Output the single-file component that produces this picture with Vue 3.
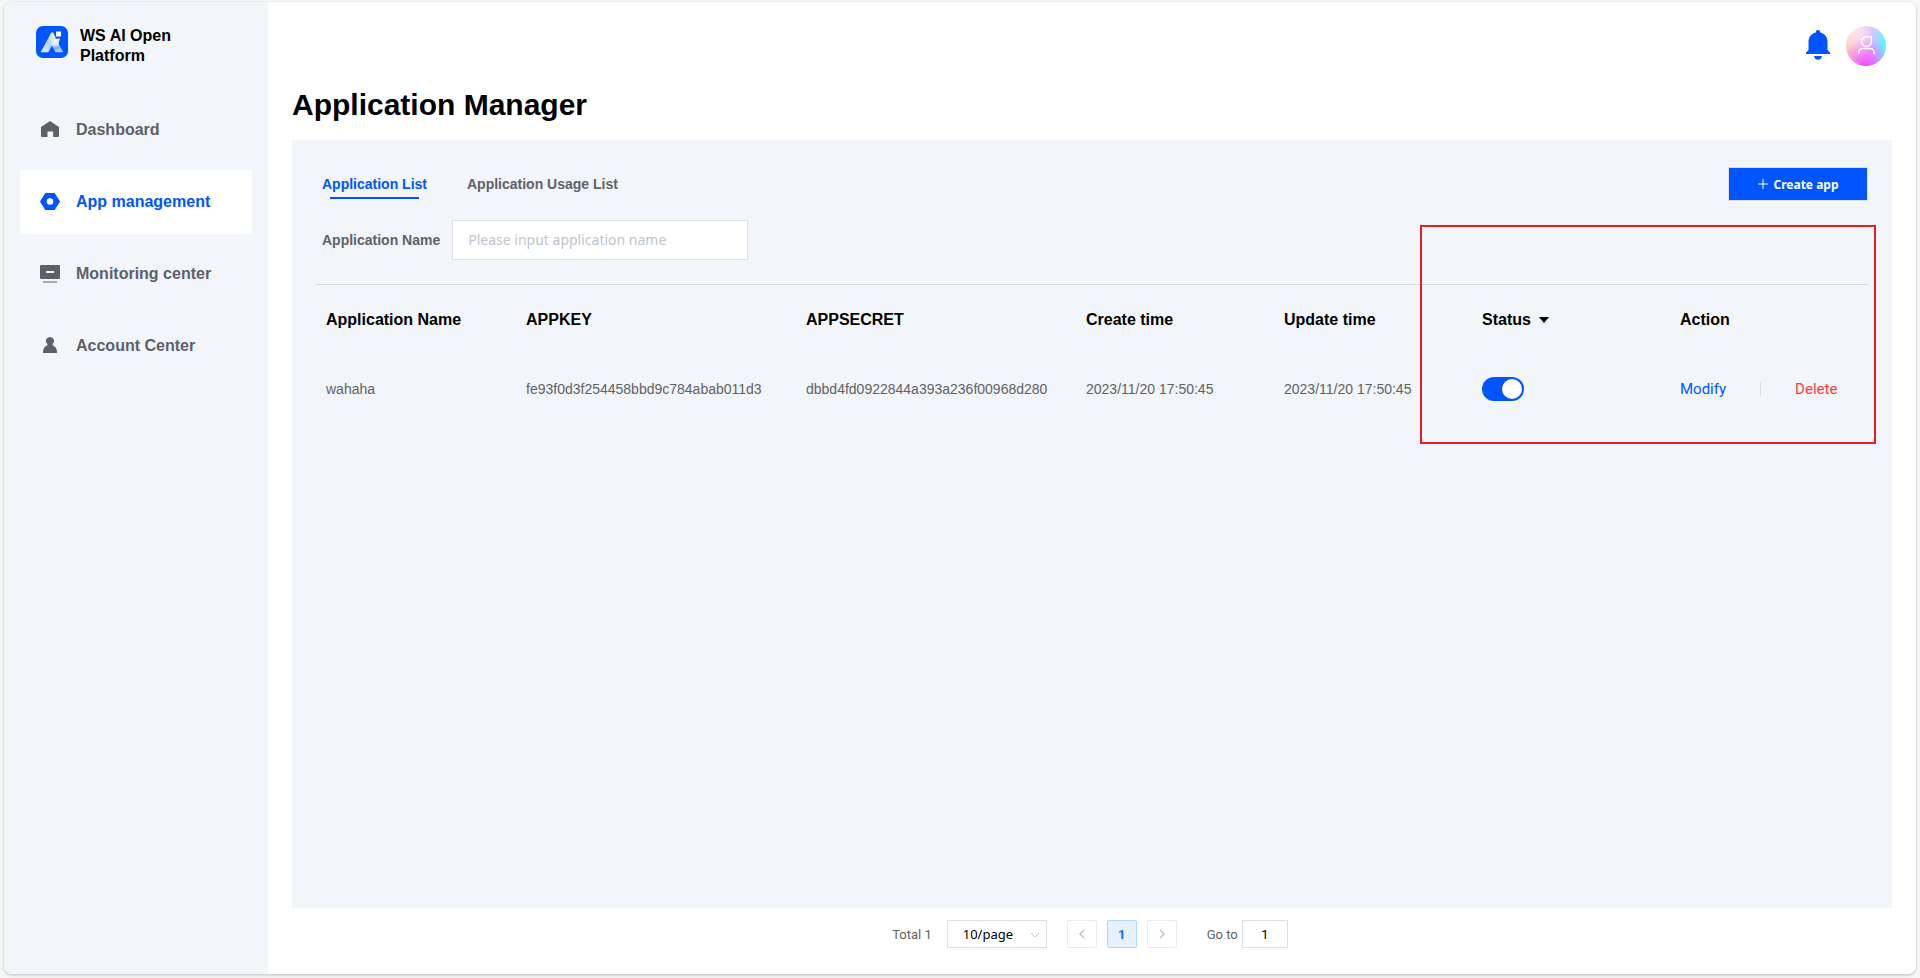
<script setup>
import { ref } from 'vue'

const menu = [
  { key: 'dashboard', label: 'Dashboard' },
  { key: 'apps', label: 'App management' },
  { key: 'monitor', label: 'Monitoring center' },
  { key: 'account', label: 'Account Center' },
]
const activeMenu = ref('apps')

const tabs = ['Application List', 'Application Usage List']
const activeTab = ref(tabs[0])

const appName = ref('')
const pageSize = ref('10/page')
const page = ref('1')

const rows = ref([
  {
    name: 'wahaha',
    key: 'fe93f0d3f254458bbd9c784abab011d3',
    secret: 'dbbd4fd0922844a393a236f00968d280',
    created: '2023/11/20 17:50:45',
    updated: '2023/11/20 17:50:45',
    enabled: true,
  },
])
</script>

<template>
  <div class="page">
    <div class="shell">
      <aside class="sidebar">
        <div class="brand">
          <svg class="logo" viewBox="0 0 32 32" aria-hidden="true">
            <defs>
              <linearGradient id="logo-left" x1="0" y1="1" x2="0.8" y2="0">
                <stop offset="0" stop-color="#fff" stop-opacity="0.95" />
                <stop offset="0.5" stop-color="#fff" stop-opacity="0.7" />
                <stop offset="1" stop-color="#fff" stop-opacity="0.95" />
              </linearGradient>
              <linearGradient id="logo-right" x1="0.5" y1="0" x2="0.6" y2="1">
                <stop offset="0" stop-color="#fff" />
                <stop offset="0.4" stop-color="#fff" stop-opacity="0.9" />
                <stop offset="0.65" stop-color="#fff" stop-opacity="0.5" />
                <stop offset="1" stop-color="#fff" stop-opacity="0.75" />
              </linearGradient>
            </defs>
            <rect width="32" height="32" rx="7" fill="#0055ff" />
            <path d="M15 7q1.200-1.600 2.400 0l2.400 5L12.300 26.300H4.700z" fill="url(#logo-left)" />
            <path d="M15.500 19l3-6 5.500-.5-1.500 5 4.700 8.800h-7.700z" fill="url(#logo-right)" />
            <rect x="20" y="5.500" width="5" height="5" fill="#fff" />
          </svg>
          <span class="brand-name">WS AI Open Platform</span>
        </div>
        <nav class="menu">
          <a
            v-for="item in menu"
            :key="item.key"
            href="#"
            class="menu-item"
            :class="{ active: item.key === activeMenu }"
            @click.prevent="activeMenu = item.key"
          >
            <svg class="menu-icon" viewBox="0 0 20 20" fill="currentColor" aria-hidden="true">
              <path v-if="item.key === 'dashboard'" d="M10 1L19 7V16a1 1 0 0 1-1 1h-4.800v-5.500H7.500v5.500H2a1 1 0 0 1-1-1V7z" />
              <path v-else-if="item.key === 'apps'" fill-rule="evenodd" d="M5.300 1h9.400L20 9.500l-5.300 8.500H5.300L0 9.500zM10 6.200a3.300 3.300 0 1 0 0 6.600 3.300 3.300 0 0 0 0-6.600z" />
              <template v-else-if="item.key === 'monitor'">
                <path fill-rule="evenodd" d="M1 1h18a1 1 0 0 1 1 1v12a1 1 0 0 1-1 1H1a1 1 0 0 1-1-1V2a1 1 0 0 1 1-1zM6 7v2h8V7z" />
                <rect x="3" y="17" width="14" height="2" opacity="0.5" />
              </template>
              <path v-else d="M10 1a4 4 0 0 1 2.600 7.100v1.200c2.600.9 4.400 3.300 4.400 6.700v1H3v-1c0-3.400 1.800-5.800 4.400-6.700V8.100A4 4 0 0 1 10 1z" />
            </svg>
            <span>{{ item.label }}</span>
          </a>
        </nav>
      </aside>

      <main class="content">
        <header class="topbar">
          <button class="plain-button" aria-label="Notifications">
            <svg class="bell" viewBox="0 0 24 32" fill="#0055ff" aria-hidden="true">
              <path d="M12 0a2.200 2.200 0 0 1 2.200 2.400C18.500 3.300 21.500 7 21.500 11.500V20L24 22.500V24H0v-1.500L2.500 20v-8.500C2.500 7 5.500 3.300 9.800 2.400A2.200 2.200 0 0 1 12 0z" />
              <path d="M8 26h8c-.3 2.300-1.700 3.700-4 3.700S8.300 28.300 8 26z" />
            </svg>
          </button>
          <button class="plain-button" aria-label="User account">
            <span class="avatar">
              <svg class="avatar-icon" viewBox="0 0 40 40" fill="none" stroke="#fff" stroke-width="1.400" aria-hidden="true">
                <path d="M25.300 10.700v4.800a4.900 4.900 0 1 1-4.900-4.800z" />
                <path d="M12.700 28v-1.500a4 4 0 0 1 4-4h7.400a4 4 0 0 1 4 4V28" />
              </svg>
            </span>
          </button>
        </header>

        <h1 class="title">Application Manager</h1>

        <section class="panel">
          <div class="panel-head">
            <div class="tabs" role="tablist">
              <button
                v-for="tab in tabs"
                :key="tab"
                role="tab"
                class="tab"
                :class="{ active: tab === activeTab }"
                :aria-selected="tab === activeTab"
                @click="activeTab = tab"
              >
                {{ tab }}
              </button>
            </div>
            <button class="create">
              <svg class="plus" viewBox="0 0 12 12" stroke="#fff" aria-hidden="true"><path d="M6 1v10M1 6h10" /></svg>
              <span>Create app</span>
            </button>
          </div>

          <div class="filter">
            <label for="app-name">Application Name</label>
            <input id="app-name" v-model="appName" type="text" placeholder="Please input application name" />
          </div>

          <table class="apps">
            <colgroup>
              <col class="col-name" />
              <col class="col-key" />
              <col class="col-key" />
              <col span="4" />
            </colgroup>
            <thead>
              <tr>
                <th>Application Name</th>
                <th>APPKEY</th>
                <th>APPSECRET</th>
                <th>Create time</th>
                <th>Update time</th>
                <th>
                  <button class="sort">
                    Status
                    <svg class="caret" viewBox="0 0 10 6" aria-hidden="true"><path d="M0 0h10L5 6z" /></svg>
                  </button>
                </th>
                <th>Action</th>
              </tr>
            </thead>
            <tbody>
              <tr v-for="row in rows" :key="row.key">
                <td>{{ row.name }}</td>
                <td>{{ row.key }}</td>
                <td>{{ row.secret }}</td>
                <td>{{ row.created }}</td>
                <td>{{ row.updated }}</td>
                <td><input v-model="row.enabled" class="switch" type="checkbox" role="switch" aria-label="Status" /></td>
                <td>
                  <div class="actions">
                    <a href="#" class="modify" @click.prevent>Modify</a>
                    <span class="separator"></span>
                    <a href="#" class="delete" @click.prevent>Delete</a>
                  </div>
                </td>
              </tr>
            </tbody>
          </table>
          <div class="highlight"></div>
        </section>

        <footer class="pager">
          <span class="total">Total 1</span>
          <span class="size">
            <select v-model="pageSize" aria-label="Rows per page">
              <option>10/page</option>
              <option>20/page</option>
              <option>50/page</option>
            </select>
            <svg class="size-arrow" viewBox="0 0 10 6" fill="none" stroke="#c0c4cc" aria-hidden="true"><path d="M1 1l4 4 4-4" /></svg>
          </span>
          <span class="pages">
            <button class="page-button" aria-label="Previous page">
              <svg class="chevron" viewBox="0 0 6 10" fill="none" stroke="#c0c4cc" stroke-width="1.500" aria-hidden="true"><path d="M5 1L1 5l4 4" /></svg>
            </button>
            <button class="page-button current">1</button>
            <button class="page-button" aria-label="Next page">
              <svg class="chevron" viewBox="0 0 6 10" fill="none" stroke="#c0c4cc" stroke-width="1.500" aria-hidden="true"><path d="M1 1l4 4-4 4" /></svg>
            </button>
          </span>
          <label class="goto">Go to <input v-model="page" type="text" /></label>
        </footer>
      </main>
    </div>
  </div>
</template>

<style>
body {
  background: #f7f7f7;
}
</style>

<style scoped>
.page,
.page * {
  box-sizing: border-box;
}
.page {
  display: flex;
  min-height: 100vh;
  padding: 2px 4px 4px;
  font-family: 'Liberation Sans', Arial, sans-serif;
  font-size: 14px;
  color: #606266;
}
.page button,
.page input,
.page select {
  font: inherit;
  color: inherit;
  margin: 0;
}
.page a {
  text-decoration: none;
}
.shell {
  flex: 1;
  display: flex;
  overflow: hidden;
  border-radius: 8px;
  background: #fff;
  box-shadow: 0 1px 3px rgba(0, 0, 0, 0.25);
}
.sidebar {
  flex: none;
  width: 264px;
  padding: 16px;
  background: #f2f5fa;
}
.brand {
  display: flex;
  gap: 12px;
  padding: 8px 16px;
}
.logo {
  flex: none;
  width: 32px;
  height: 32px;
}
.brand-name {
  width: 120px;
  font-size: 16px;
  font-weight: bold;
  line-height: 20px;
  color: #000;
}
.menu {
  display: flex;
  flex-direction: column;
  gap: 8px;
  margin-top: 24px;
}
.menu-item {
  display: flex;
  align-items: center;
  gap: 16px;
  height: 64px;
  padding: 0 20px;
  font-size: 16px;
  font-weight: bold;
  color: #5c606a;
}
.page .menu-item.active {
  background: #fff;
  color: #0055ff;
}
.menu-icon {
  width: 20px;
  height: 20px;
}
.content {
  flex: 1;
  display: flex;
  flex-direction: column;
  min-width: 0;
  padding: 24px;
}
.topbar {
  display: flex;
  justify-content: flex-end;
  align-items: center;
  gap: 16px;
  padding-right: 6px;
}
.page .plain-button {
  display: flex;
  padding: 0;
  border: 0;
  background: none;
  cursor: pointer;
}
.bell {
  width: 24px;
  height: 32px;
}
.avatar {
  width: 40px;
  height: 40px;
  border-radius: 50%;
  background:
    radial-gradient(circle at 50% 100%, #f04bff 0, rgba(240, 90, 255, 0.5) 30%, rgba(240, 120, 255, 0) 60%),
    radial-gradient(circle at 20% 0, rgba(255, 255, 255, 0.7) 0, rgba(255, 255, 255, 0) 60%),
    linear-gradient(90deg, #ffc8b0 0, #f9b8e8 40%, #d0b0ff 65%, #62f4ff 95%);
  overflow: hidden;
}
.avatar-icon {
  display: block;
  width: 40px;
  height: 40px;
}
.title {
  margin: 20px 0 16px;
  font-size: 30px;
  line-height: 38px;
  color: #000;
}
.panel {
  position: relative;
  flex: 1;
  padding: 27px 24px;
  background: #f2f5fa;
}
.panel-head {
  display: flex;
  justify-content: space-between;
  align-items: center;
}
.tabs {
  display: flex;
  gap: 40px;
  padding-left: 6px;
}
.page .tab {
  position: relative;
  height: 34px;
  padding: 0;
  border: 0;
  background: none;
  font-weight: bold;
  cursor: pointer;
}
.page .tab.active {
  color: #0055ff;
}
.tab.active::after {
  content: '';
  position: absolute;
  left: 8px;
  right: 8px;
  bottom: 2px;
  height: 2px;
  background: #0055ff;
}
.page .create {
  display: flex;
  align-items: center;
  justify-content: center;
  gap: 4px;
  width: 140px;
  height: 34px;
  padding: 0;
  border: 1px solid #dcdfe6;
  background: #0055ff;
  font-family: 'Noto Sans', sans-serif;
  font-size: 12px;
  font-weight: bold;
  color: #fff;
  cursor: pointer;
}
.plus {
  width: 12px;
  height: 12px;
}
.filter {
  display: flex;
  align-items: center;
  gap: 12px;
  margin: 19px 0 24px;
  padding-left: 6px;
}
.filter label {
  font-weight: bold;
}
.page .filter input {
  width: 296px;
  height: 40px;
  padding: 0 15px 2px;
  border: 1px solid #dcdfe6;
  background: #fff;
  font-family: 'Noto Sans', sans-serif;
}
.filter input::placeholder {
  color: #c0c4cc;
  opacity: 1;
}
.apps {
  width: 100%;
  table-layout: fixed;
  border-collapse: separate;
  border-spacing: 0;
  border-top: 1px solid #d5d9e0;
}
.col-name {
  width: 200px;
}
.col-key {
  width: 280px;
}
.apps th,
.apps td {
  height: 69px;
  padding: 0 10px;
  text-align: left;
  white-space: nowrap;
}
.apps th {
  font-size: 16px;
  color: #000;
}
.page .sort {
  display: flex;
  align-items: center;
  gap: 8px;
  padding: 0;
  border: 0;
  background: none;
  cursor: pointer;
}
.caret {
  width: 10px;
  height: 6px;
}
.switch {
  appearance: none;
  display: block;
  width: 42px;
  height: 24px;
  padding: 2px;
  border-radius: 12px;
  background: #c0c4cc;
  cursor: pointer;
}
.switch::before {
  content: '';
  display: block;
  width: 20px;
  height: 20px;
  border-radius: 50%;
  background: #fff;
}
.switch:checked {
  background: #0055ff;
}
.switch:checked::before {
  margin-left: auto;
}
.actions {
  display: flex;
  align-items: center;
  gap: 34px;
  font-family: Roboto, sans-serif;
  font-size: 15px;
}
.separator {
  width: 1px;
  height: 14px;
  background: #dcdfe6;
}
.page .modify {
  color: #0055ff;
}
.page .delete {
  color: #ff3b3b;
}
.highlight {
  position: absolute;
  top: 85px;
  right: 16px;
  width: 456px;
  height: 219px;
  border: 2px solid #ed1c24;
  pointer-events: none;
}
.pager {
  display: flex;
  justify-content: center;
  align-items: center;
  height: 28px;
  margin: 12px 4px 2px 0;
  font-family: Roboto, sans-serif;
  font-size: 13px;
}
.size {
  position: relative;
  margin: 0 20px 0 15px;
}
.page .size select {
  display: block;
  appearance: none;
  width: 100px;
  height: 28px;
  padding: 0 15px;
  border: 1px solid #dcdfe6;
  border-radius: 0;
  background: #fff;
  font-family: 'Noto Sans', sans-serif;
  color: #000;
}
.size-arrow {
  position: absolute;
  top: 12px;
  right: 7px;
  width: 10px;
  height: 6px;
  pointer-events: none;
}
.pages {
  display: flex;
  gap: 10px;
}
.page .page-button {
  display: flex;
  align-items: center;
  justify-content: center;
  width: 30px;
  height: 28px;
  padding: 0;
  border: 1px solid #e8eaee;
  border-radius: 2px;
  background: #fff;
  cursor: pointer;
}
.page .page-button.current {
  border-color: #b3d8ff;
  background: #e5f1ff;
  font-weight: bold;
  color: #0f68ff;
}
.chevron {
  width: 6px;
  height: 10px;
}
.goto {
  display: flex;
  align-items: center;
  gap: 4px;
  margin-left: 30px;
}
.page .goto input {
  width: 46px;
  height: 28px;
  padding: 0;
  border: 1px solid #dcdfe6;
  background: #fff;
  text-align: center;
  color: #000;
}
</style>
